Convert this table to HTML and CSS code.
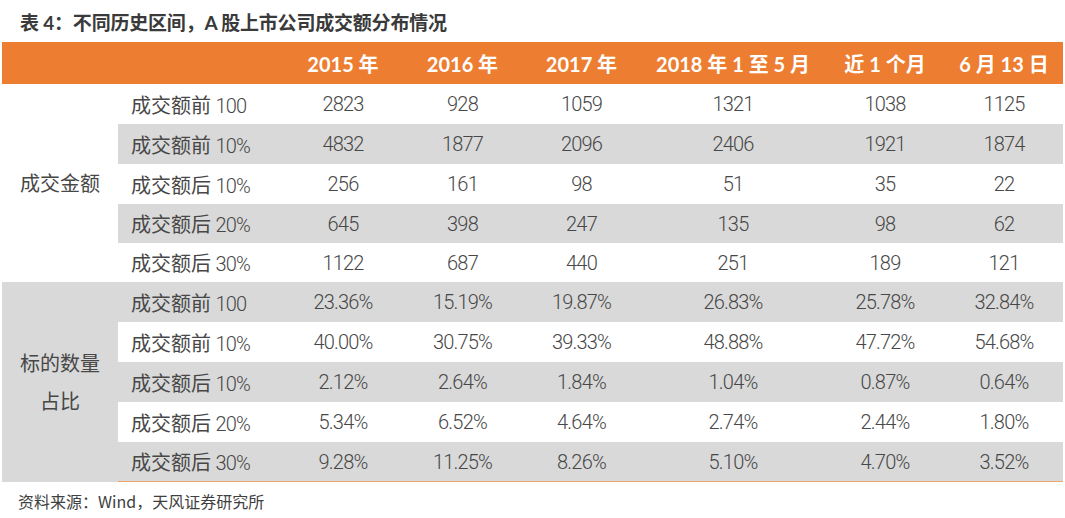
FILE: index.html
```html
<!DOCTYPE html>
<html lang="zh">
<head>
<meta charset="utf-8">
<link rel="stylesheet" href="styles.css">
</head>
<body>
<div class="page">
  <h1 class="title">表 4：不同历史区间，A 股上市公司成交额分布情况</h1>
  <table class="tbl">
    <colgroup>
      <col class="c1"><col class="c2"><col class="c3"><col class="c4"><col class="c5"><col class="c6"><col class="c7"><col class="c8">
    </colgroup>
    <thead>
      <tr>
        <th></th><th></th><th>2015 年</th><th>2016 年</th><th>2017 年</th><th>2018 年 1 至 5 月</th><th>近 1 个月</th><th>6 月 13 日</th>
      </tr>
    </thead>
    <tbody class="g1">
      <tr class="r h40">
        <td class="grp" rowspan="5">成交金额</td>
        <td class="lbl">成交额前 <span class="n">100</span></td><td>2823</td><td>928</td><td>1059</td><td>1321</td><td>1038</td><td>1125</td>
      </tr>
      <tr class="r h40 alt">
        <td class="lbl">成交额前 <span class="n">10%</span></td><td>4832</td><td>1877</td><td>2096</td><td>2406</td><td>1921</td><td>1874</td>
      </tr>
      <tr class="r h40">
        <td class="lbl">成交额后 <span class="n">10%</span></td><td>256</td><td>161</td><td>98</td><td>51</td><td>35</td><td>22</td>
      </tr>
      <tr class="r h39 alt">
        <td class="lbl">成交额后 <span class="n">20%</span></td><td>645</td><td>398</td><td>247</td><td>135</td><td>98</td><td>62</td>
      </tr>
      <tr class="r h39">
        <td class="lbl">成交额后 <span class="n">30%</span></td><td>1122</td><td>687</td><td>440</td><td>251</td><td>189</td><td>121</td>
      </tr>
    </tbody>
    <tbody class="g2">
      <tr class="r h40 alt">
        <td class="grp grp2" rowspan="5">标的数量<br>占比</td>
        <td class="lbl">成交额前 <span class="n">100</span></td><td>23.36%</td><td>15.19%</td><td>19.87%</td><td>26.83%</td><td>25.78%</td><td>32.84%</td>
      </tr>
      <tr class="r h40">
        <td class="lbl">成交额前 <span class="n">10%</span></td><td>40.00%</td><td>30.75%</td><td>39.33%</td><td>48.88%</td><td>47.72%</td><td>54.68%</td>
      </tr>
      <tr class="r h40 alt">
        <td class="lbl">成交额后 <span class="n">10%</span></td><td>2.12%</td><td>2.64%</td><td>1.84%</td><td>1.04%</td><td>0.87%</td><td>0.64%</td>
      </tr>
      <tr class="r h40">
        <td class="lbl">成交额后 <span class="n">20%</span></td><td>5.34%</td><td>6.52%</td><td>4.64%</td><td>2.74%</td><td>2.44%</td><td>1.80%</td>
      </tr>
      <tr class="r h39 alt last">
        <td class="lbl">成交额后 <span class="n">30%</span></td><td>9.28%</td><td>11.25%</td><td>8.26%</td><td>5.10%</td><td>4.70%</td><td>3.52%</td>
      </tr>
    </tbody>
  </table>
  <p class="source">资料来源：Wind，天风证券研究所</p>
</div>
</body>
</html>
```
FILE: styles.css
```css
html, body {
  margin: 0;
  padding: 0;
  background: #ffffff;
}

.page {
  width: 1065px;
  height: 518px;
  padding: 0 2px;
  box-sizing: border-box;
  font-family: Lato, "Noto Sans CJK SC", sans-serif;
}

.title {
  margin: 0;
  padding: 10px 0 0 18px;
  height: 42px;
  box-sizing: border-box;
  font-size: 19px;
  line-height: 26px;
  font-weight: 700;
  color: #3a3a3a;
  letter-spacing: -0.2px;
}

.tbl {
  width: 1061px;
  border-collapse: collapse;
  table-layout: fixed;
  color: #474747;
}

.c1 { width: 116px; }
.c2 { width: 165px; }
.c3 { width: 120px; }
.c4 { width: 119px; }
.c5 { width: 119px; }
.c6 { width: 184px; }
.c7 { width: 120px; }
.c8 { width: 118px; }

.tbl th {
  background: #ed7d31;
  color: #ffffff;
  height: 42px;
  padding: 0;
  font-size: 20px;
  font-weight: 700;
  text-align: center;
  vertical-align: middle;
  white-space: nowrap;
}

.tbl td {
  padding: 0;
  text-align: center;
  vertical-align: middle;
  font-family: Roboto, "Noto Sans CJK SC", sans-serif;
  font-size: 20px;
  font-weight: 300;
  letter-spacing: -0.8px;
  white-space: nowrap;
}

.h40 td { height: 40px; }
.h39 td { height: 39px; }

.alt td { background: #d9d9d9; }

.tbl td.grp {
  font-family: "Noto Sans CJK SC", sans-serif;
  font-size: 20px;
  letter-spacing: 0;
  background: #ffffff;
  line-height: 38px;
  font-weight: 400;
}

.tbl td.grp2 { background: #d9d9d9; }

.tbl td.lbl {
  text-align: left;
  padding-left: 13px;
  font-family: "Noto Sans CJK SC", sans-serif;
  font-size: 20px;
  letter-spacing: 0;
  font-weight: 400;
}

.lbl .n {
  font-family: Roboto, sans-serif;
  font-size: 20px;
  font-weight: 300;
  letter-spacing: -0.8px;
}

.last td { border-bottom: 1.5px solid #f0a46e; }

.source {
  margin: 0;
  padding: 9px 0 0 16px;
  font-family: "Noto Sans CJK SC", sans-serif;
  font-size: 16px;
  line-height: 20px;
  color: #404040;
  font-weight: 400;
}
```
